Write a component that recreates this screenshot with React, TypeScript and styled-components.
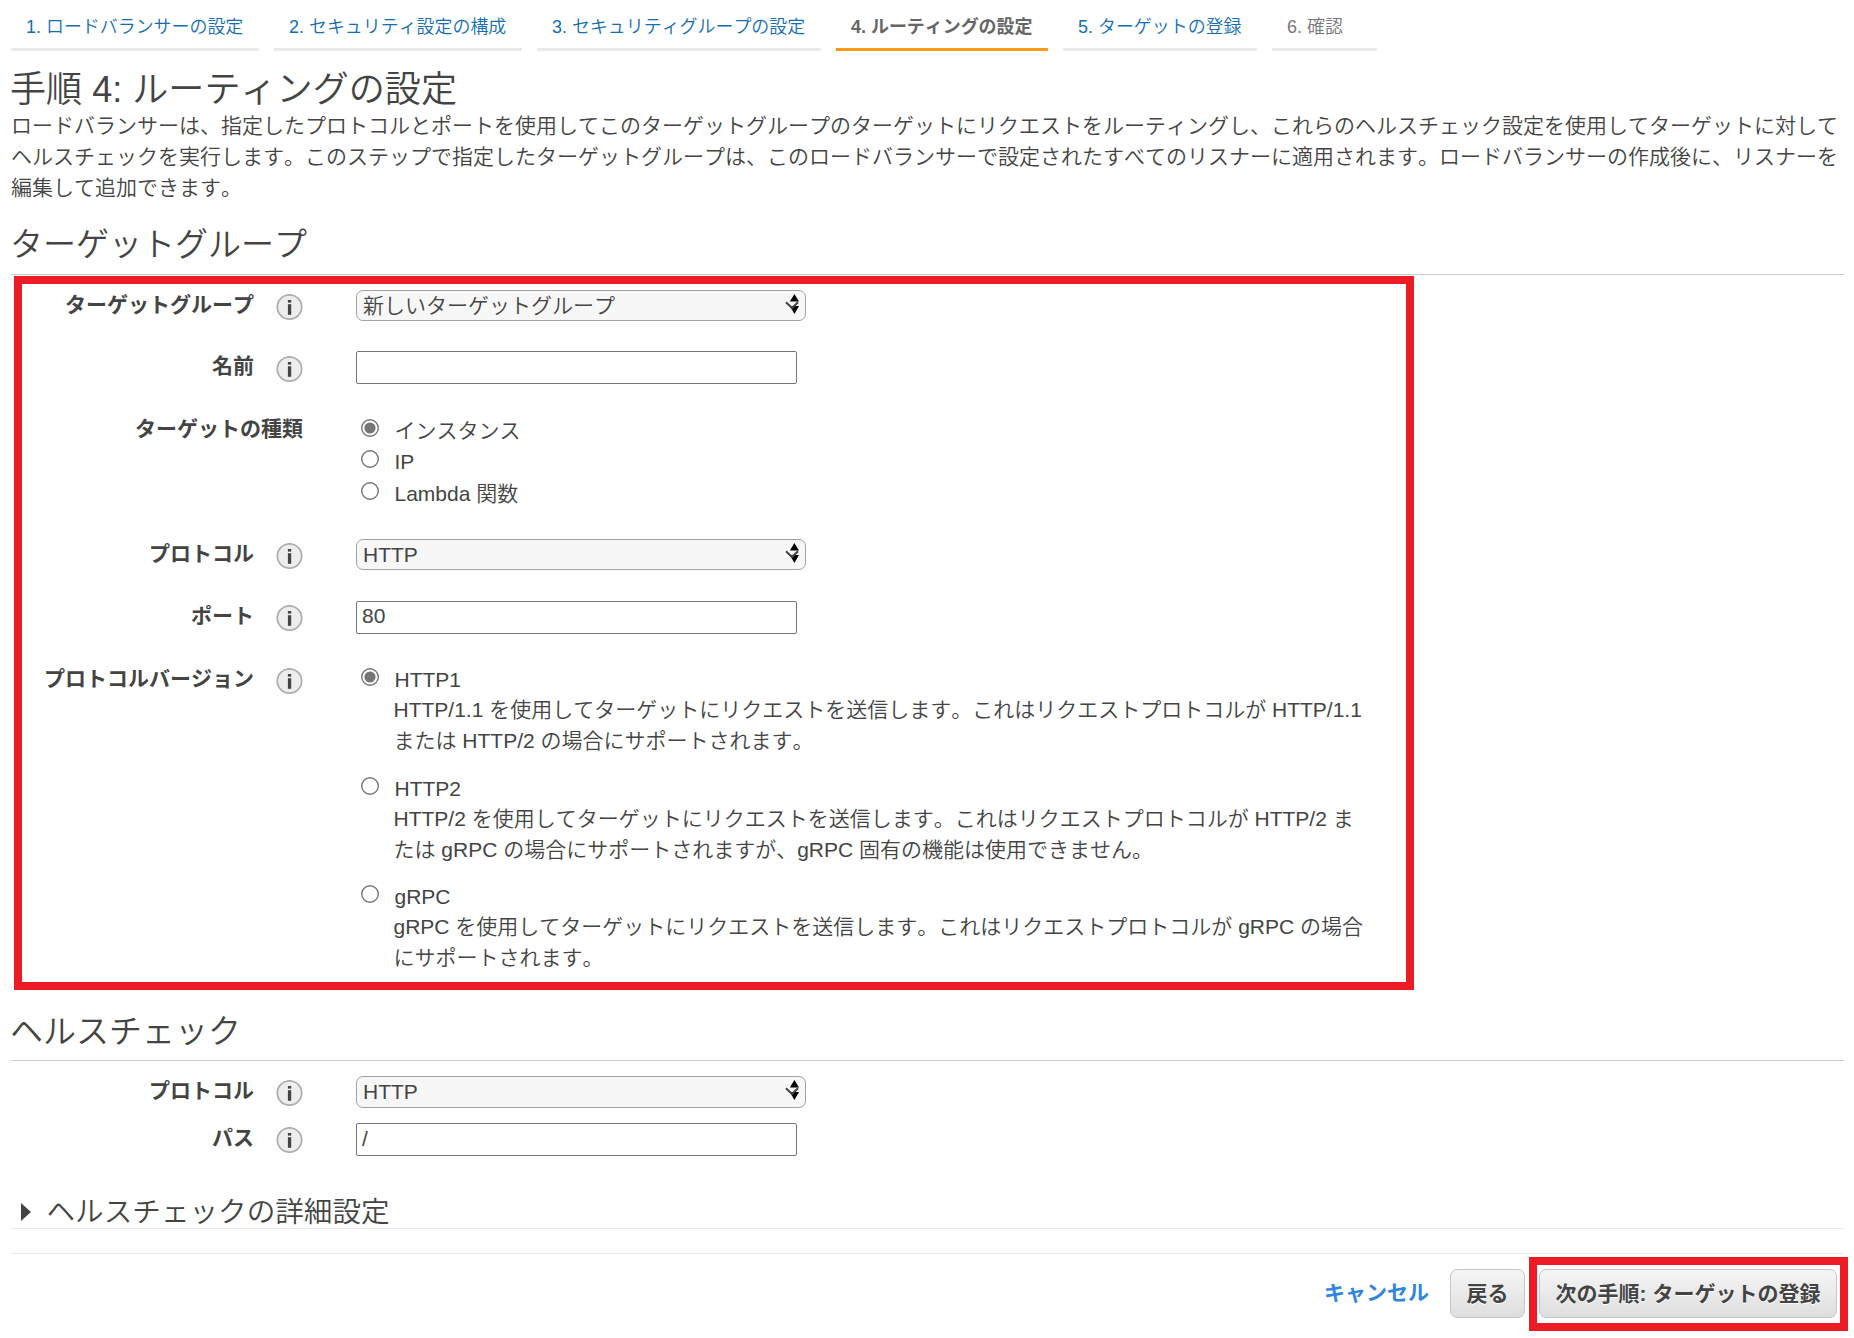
import React from "react";
import styled, { createGlobalStyle } from "styled-components";

const GlobalStyle = createGlobalStyle`
  *, *::before, *::after { box-sizing: border-box; }
  body {
    margin: 0;
    background: #fff;
    color: #444;
    font-family: "Liberation Sans", "Noto Sans CJK JP", sans-serif;
    font-size: 21px;
    line-height: 31px;
    font-kerning: none;
  }
`;

const Page = styled.div`
  width: 1854px;
  min-height: 1338px;
  padding: 0 10px 0 11px;
  white-space: nowrap;
  font-weight: 350;
`;

const Steps = styled.nav`
  display: flex;
  gap: 15px;
  font-size: 17.95px;
`;

const Step = styled.a<{ $width: number; $state?: "active" | "disabled" }>`
  width: ${(p) => p.$width}px;
  height: 51px;
  padding: 0 15px;
  line-height: 54px;
  border-bottom: 3px solid ${(p) => (p.$state === "active" ? "#ff9914" : "#eaeaea")};
  color: ${(p) => (p.$state === "active" ? "#666" : p.$state === "disabled" ? "#777" : "#146eb4")};
  font-weight: ${(p) => (p.$state === "active" ? 700 : 350)};
`;

const Title = styled.h1`
  margin: 18px 0 0 -1px;
  font-size: 36.1px;
  line-height: 42px;
  font-weight: 350;
`;

const Lead = styled.p`
  margin: -1px 0 0;
  padding-bottom: 1px;
`;

const SectionTitle = styled.h2<{ $shift?: number }>`
  margin: ${(p) => 20 + (p.$shift ?? 0)}px 0 0;
  padding-bottom: ${(p) => 8 - (p.$shift ?? 0)}px;
  border-bottom: 1px solid #ccc;
  font-size: 33px;
  line-height: 42px;
  font-weight: 350;
  text-indent: -1px;
`;

const TargetGroup = styled.section`
  display: flow-root;
  position: relative;
  padding-bottom: 16px;
`;

const Highlight = styled.div`
  position: absolute;
  top: 1px;
  left: 3px;
  width: 1400px;
  height: 714px;
  border: 8px solid #ed1c24;
  pointer-events: none;
`;

const FieldRow = styled.div<{ $gap: number }>`
  display: grid;
  grid-template-columns: 292px 1fr;
  column-gap: 53px;
  align-items: start;
  margin-top: ${(p) => p.$gap}px;
`;

const LabelCell = styled.div`
  display: flex;
  justify-content: flex-end;
  align-items: flex-start;
  gap: 22px;
  font-weight: 700;
`;

const LabelText = styled.span`
  margin-top: -1px;
`;

const InfoBadge = styled.svg<{ $top: number }>`
  display: block;
  width: 27px;
  height: 27px;
  margin-top: ${(p) => p.$top}px;
`;

const SelectBox = styled.div<{ $height: number }>`
  display: flex;
  justify-content: space-between;
  width: 450px;
  height: ${(p) => p.$height}px;
  padding: 0 5px 0 6px;
  border: 1px solid #a2a2a2;
  border-radius: 7px;
  background: #f7f7f7;
  line-height: 29px;
`;

const SelectArrows = styled.svg`
  width: 16px;
  height: 22px;
  margin-top: 2px;
`;

const TextInput = styled.input`
  display: block;
  width: 441px;
  height: 33px;
  margin: 0;
  padding: 0 5px 2px;
  border: 1px solid #767676;
  border-radius: 2px;
  background: #fff;
  color: #444;
  font: inherit;
`;

const Options = styled.div<{ $gap: number; $top: number }>`
  display: flex;
  flex-direction: column;
  gap: ${(p) => p.$gap}px;
  padding: ${(p) => p.$top}px 0 0 5px;
`;

const Option = styled.label`
  display: grid;
  grid-template-columns: 18px auto;
  column-gap: 15.5px;
  align-items: start;
`;

const RadioMark = styled.svg`
  display: block;
  width: 18px;
  height: 18px;
  margin-top: 4px;
`;

const Description = styled.span`
  display: block;
  margin: -1px 0 1px -1px;
`;

const Details = styled.h3`
  display: flex;
  align-items: center;
  gap: 15.5px;
  margin: 40px 0 0;
  padding-left: 10px;
  border-bottom: 1px solid #eaeaea;
  font-size: 28.6px;
  line-height: 32px;
  font-weight: 350;
`;

const Caret = styled.span`
  border-left: 10px solid #444;
  border-top: 9px solid transparent;
  border-bottom: 9px solid transparent;
`;

const Footer = styled.footer`
  display: flex;
  justify-content: flex-end;
  align-items: center;
  margin-top: 24px;
  padding: 15px 7px 0 0;
  border-top: 1px solid #eaeaea;
`;

const Cancel = styled.a`
  margin: -2px 21px 0 0;
  color: #2e86de;
  font-weight: 700;
`;

const Button = styled.button<{ $width: number }>`
  display: block;
  width: ${(p) => p.$width}px;
  height: 49px;
  padding: 0 0 1px;
  border: 1px solid #c4c8ca;
  border-radius: 7px;
  background: linear-gradient(#f5f5f5, #dedede);
  color: #444;
  font: inherit;
  font-weight: 700;
  text-shadow: 0 1px 0 #fff;
`;

const NextSlot = styled.div`
  position: relative;
  margin-left: 14px;
`;

const NextHighlight = styled.div`
  position: absolute;
  inset: -12px -11px -13px -10px;
  border: 8px solid #ed1c24;
  pointer-events: none;
`;

function Info({ top = 4 }: { top?: number }) {
  return (
    <InfoBadge $top={top} viewBox="0 0 27 27">
      <circle cx="13.5" cy="13" r="12.2" fill="#ededed" stroke="#adadad" strokeWidth="1.7" />
      <rect x="11.9" y="6" width="3.3" height="2.6" fill="#444" />
      <rect x="11.9" y="10.2" width="3.3" height="10.6" fill="#444" />
    </InfoBadge>
  );
}

function Field(props: { label: string; gap: number; iconTop?: number; noInfo?: boolean; children: React.ReactNode }) {
  return (
    <FieldRow $gap={props.gap}>
      <LabelCell>
        <LabelText>{props.label}</LabelText>
        {!props.noInfo && <Info top={props.iconTop} />}
      </LabelCell>
      {props.children}
    </FieldRow>
  );
}

function Select({ value, height = 31 }: { value: string; height?: number }) {
  return (
    <SelectBox $height={height} role="combobox" tabIndex={0}>
      <span>{value}</span>
      <SelectArrows viewBox="0 0 16 22">
        <path d="M10.4 1 L15 8.6 H5.9 Z" fill="#000" />
        <path d="M5.9 13 H15 L10.4 21 Z" fill="#000" />
        <path d="M2 9.2 L8 15 L14 9.2" fill="none" stroke="#444" strokeWidth="2" />
      </SelectArrows>
    </SelectBox>
  );
}

function Radio({ checked }: { checked?: boolean }) {
  return (
    <RadioMark viewBox="0 0 18 18">
      <circle cx="9" cy="9" r="8.3" fill="#fff" stroke="#767676" strokeWidth="1.4" />
      {checked && <circle cx="9" cy="9" r="5.6" fill="#767676" />}
    </RadioMark>
  );
}

const versions = [
  {
    name: "HTTP1",
    lines: [
      "HTTP/1.1 を使用してターゲットにリクエストを送信します。これはリクエストプロトコルが HTTP/1.1",
      "または HTTP/2 の場合にサポートされます。",
    ],
  },
  {
    name: "HTTP2",
    lines: [
      "HTTP/2 を使用してターゲットにリクエストを送信します。これはリクエストプロトコルが HTTP/2 ま",
      "たは gRPC の場合にサポートされますが、gRPC 固有の機能は使用できません。",
    ],
  },
  {
    name: "gRPC",
    lines: [
      "gRPC を使用してターゲットにリクエストを送信します。これはリクエストプロトコルが gRPC の場合",
      "にサポートされます。",
    ],
  },
];

export default function App() {
  return (
    <Page>
      <GlobalStyle />
      <Steps>
        <Step $width={248}>1. ロードバランサーの設定</Step>
        <Step $width={248}>2. セキュリティ設定の構成</Step>
        <Step $width={284}>3. セキュリティグループの設定</Step>
        <Step $width={212} $state="active">4. ルーティングの設定</Step>
        <Step $width={194}>5. ターゲットの登録</Step>
        <Step $width={105} $state="disabled">6. 確認</Step>
      </Steps>

      <Title>手順 4: ルーティングの設定</Title>
      <Lead>
        ロードバランサーは、指定したプロトコルとポートを使用してこのターゲットグループのターゲットにリクエストをルーティングし、これらのヘルスチェック設定を使用してターゲットに対して
        <br />
        ヘルスチェックを実行します。このステップで指定したターゲットグループは、このロードバランサーで設定されたすべてのリスナーに適用されます。ロードバランサーの作成後に、リスナーを
        <br />
        編集して追加できます。
      </Lead>

      <SectionTitle>ターゲットグループ</SectionTitle>
      <TargetGroup>
        <Highlight />
        <Field label="ターゲットグループ" gap={15}>
          <Select value="新しいターゲットグループ" />
        </Field>
        <Field label="名前" gap={30} iconTop={5}>
          <TextInput />
        </Field>
        <Field label="ターゲットの種類" gap={30} noInfo>
          <Options $gap={0.4} $top={1}>
            {["インスタンス", "IP", "Lambda 関数"].map((name, i) => (
              <Option key={name}>
                <Radio checked={i === 0} />
                <span>{name}</span>
              </Option>
            ))}
          </Options>
        </Field>
        <Field label="プロトコル" gap={30.2}>
          <Select value="HTTP" />
        </Field>
        <Field label="ポート" gap={31}>
          <TextInput defaultValue="80" />
        </Field>
        <Field label="プロトコルバージョン" gap={30}>
          <Options $gap={15.6} $top={0}>
            {versions.map((v, i) => (
              <Option key={v.name}>
                <Radio checked={i === 0} />
                <div>
                  {v.name}
                  <Description>
                    {v.lines[0]}
                    <br />
                    {v.lines[1]}
                  </Description>
                </div>
              </Option>
            ))}
          </Options>
        </Field>
      </TargetGroup>

      <SectionTitle $shift={1}>ヘルスチェック</SectionTitle>
      <Field label="プロトコル" gap={15}>
        <Select value="HTTP" height={32} />
      </Field>
      <Field label="パス" gap={15}>
        <TextInput defaultValue="/" />
      </Field>

      <Details>
        <Caret />
        ヘルスチェックの詳細設定
      </Details>

      <Footer>
        <Cancel>キャンセル</Cancel>
        <Button $width={75}>戻る</Button>
        <NextSlot>
          <Button $width={298}>次の手順: ターゲットの登録</Button>
          <NextHighlight />
        </NextSlot>
      </Footer>
    </Page>
  );
}
